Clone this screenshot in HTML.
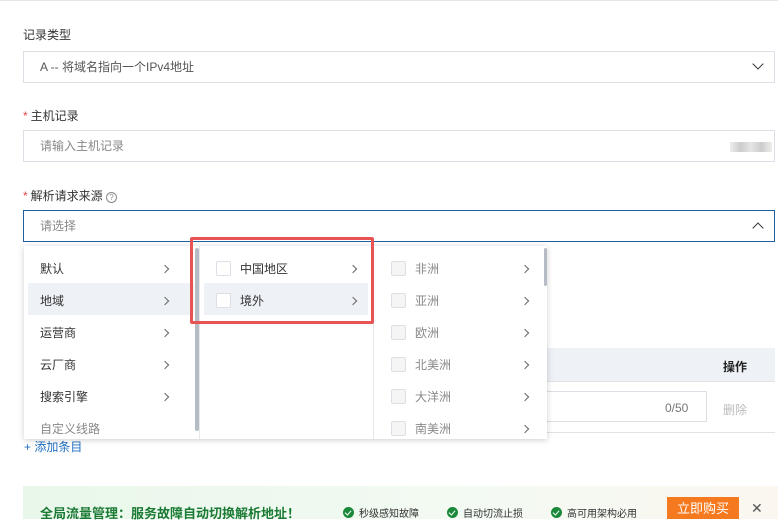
<!DOCTYPE html>
<html><head><meta charset="utf-8"><style>
*{box-sizing:border-box;margin:0;padding:0}
body{width:778px;height:519px;overflow:hidden;background:#fff;font-family:"Liberation Sans","Noto Sans CJK SC",sans-serif;font-size:12px;color:#333;position:relative}
.a{position:absolute}
.lbl{font-size:12px;color:#333}
.lbl i{color:#e54545;font-style:normal;margin-right:3px}
.inp{border:1px solid #dcdfe6;height:32px;left:23px;width:752px;padding-left:16px;line-height:30px;color:#888;font-size:12px}
.chev{position:absolute;right:12px;top:10px;width:8px;height:8px;border-right:1.5px solid #333;border-bottom:1.5px solid #333}
.row{position:absolute;height:32px;line-height:32px;font-size:12px;color:#333}
.arr{position:absolute;width:6px;height:6px;border-right:1px solid #666;border-top:1px solid #666;transform:rotate(45deg)}
.cb{position:absolute;width:15px;height:15px;border:1px solid #dcdfe6;background:#fff;border-radius:2px}
.cb.d{background:#f5f5f5}
.badge{position:absolute;display:inline-flex;align-items:center;font-size:10px;color:#333;white-space:nowrap}
.badge b{width:11px;height:11px;border-radius:50%;background:#1a8a3a;margin-right:5px;display:inline-block;position:relative}
.badge b:after{content:"";position:absolute;left:3px;top:2px;width:3px;height:5px;border-right:1.5px solid #fff;border-bottom:1.5px solid #fff;transform:rotate(40deg)}
</style></head><body>
<div class="a" style="left:0;top:0;width:778px;height:1px;background:#e6e6e6"></div>
<div class="a lbl" style="left:23px;top:26px">记录类型</div>
<div class="a inp" style="top:51px;color:#555">A -- 将域名指向一个IPv4地址<span class="chev" style="transform:rotate(45deg);top:8px"></span></div>
<div class="a lbl" style="left:23px;top:107px"><i>*</i>主机记录</div>
<div class="a inp" style="top:130px">请输入主机记录<span class="a" style="right:2px;top:11px;width:42px;height:10px;background:linear-gradient(90deg,#eee,#ccc,#e5e5e5,#ccc,#eee)"></span></div>
<div class="a lbl" style="left:23px;top:187px"><i>*</i>解析请求来源 <span style="display:inline-block;width:11px;height:11px;border:1px solid #888;border-radius:50%;font-size:8px;line-height:9px;text-align:center;color:#888">?</span></div>
<div class="a inp" style="top:210px;border-color:#1f5f9e">请选择<span class="chev" style="transform:rotate(-135deg);top:13px"></span></div>

<div class="a" style="left:547px;top:348px;width:228px;height:34px;background:#eef1f6;border-bottom:1px solid #e3e3e3"></div>
<div class="a" style="left:723px;top:358px;font-weight:bold;color:#222">操作</div>
<div class="a" style="left:540px;top:391px;width:167px;height:31px;border:1px solid #dcdfe6"></div>
<div class="a" style="left:665px;top:401px;color:#777">0/50</div>
<div class="a" style="left:723px;top:401px;color:#bbb">删除</div>
<div class="a" style="left:540px;top:432px;width:235px;height:1px;background:#e3e3e3"></div>
<div class="a" style="left:24px;top:438px;color:#1f6fc2;font-size:12px">+ 添加条目</div>

<div class="a" style="left:24px;top:246px;width:523px;height:193px;background:#fff;box-shadow:0 1px 6px rgba(0,0,0,.2);overflow:hidden">
 <div class="a" style="left:171px;top:2px;width:4px;height:183px;background:#b5bcc6;border-radius:2px"></div>
 <div class="a" style="left:175px;top:0;width:1px;height:193px;background:#e8e8e8"></div>
 <div class="a" style="left:349px;top:0;width:1px;height:193px;background:#e8e8e8"></div>
 <div class="a" style="left:520px;top:2px;width:3px;height:38px;background:#b5bcc6;border-radius:2px"></div>
 <div class="a" style="left:4px;top:37px;width:166px;height:32px;background:#eef1f6"></div>
 <div class="a" style="left:180px;top:37px;width:164px;height:32px;background:#eef1f6"></div>
 <div class="row" style="left:16px;top:7px">默认</div>
 <div class="row" style="left:16px;top:39px">地域</div>
 <div class="row" style="left:16px;top:71px">运营商</div>
 <div class="row" style="left:16px;top:103px">云厂商</div>
 <div class="row" style="left:16px;top:135px">搜索引擎</div>
 <div class="row" style="left:16px;top:167px;color:#888">自定义线路</div>
 <div class="arr" style="left:138px;top:20px"></div><div class="arr" style="left:138px;top:52px"></div><div class="arr" style="left:138px;top:84px"></div><div class="arr" style="left:138px;top:116px"></div><div class="arr" style="left:138px;top:148px"></div>
 <div class="cb" style="left:192px;top:15px"></div><div class="row" style="left:216px;top:7px">中国地区</div><div class="arr" style="left:326px;top:20px"></div>
 <div class="cb" style="left:192px;top:47px"></div><div class="row" style="left:216px;top:39px">境外</div><div class="arr" style="left:326px;top:52px"></div>
 <div class="cb d" style="left:367px;top:15px"></div><div class="row" style="left:391px;top:7px;color:#888">非洲</div><div class="arr" style="left:498px;top:20px"></div>
 <div class="cb d" style="left:367px;top:47px"></div><div class="row" style="left:391px;top:39px;color:#888">亚洲</div><div class="arr" style="left:498px;top:52px"></div>
 <div class="cb d" style="left:367px;top:79px"></div><div class="row" style="left:391px;top:71px;color:#888">欧洲</div><div class="arr" style="left:498px;top:84px"></div>
 <div class="cb d" style="left:367px;top:111px"></div><div class="row" style="left:391px;top:103px;color:#888">北美洲</div><div class="arr" style="left:498px;top:116px"></div>
 <div class="cb d" style="left:367px;top:143px"></div><div class="row" style="left:391px;top:135px;color:#888">大洋洲</div><div class="arr" style="left:498px;top:148px"></div>
 <div class="cb d" style="left:367px;top:175px"></div><div class="row" style="left:391px;top:167px;color:#888">南美洲</div><div class="arr" style="left:498px;top:180px"></div>
</div>
<div class="a" style="left:190px;top:237px;width:184px;height:87px;border:3px solid #e85454;border-radius:2px"></div>

<div class="a" style="left:23px;top:486px;width:755px;height:33px;background:linear-gradient(90deg,#e9f7ea,#f3faf3 60%,#fbf6f0)"></div>
<div class="a" style="left:40px;top:503px;color:#1a7a34;font-size:13px;font-weight:bold">全局流量管理：服务故障自动切换解析地址！</div>
<span class="badge" style="left:343px;top:505px"><b></b>秒级感知故障</span>
<span class="badge" style="left:447px;top:505px"><b></b>自动切流止损</span>
<span class="badge" style="left:551px;top:505px"><b></b>高可用架构必用</span>
<div class="a" style="left:667px;top:497px;width:72px;height:22px;background:#f57a1f;color:#fff;font-size:13px;text-align:center;line-height:24px">立即购买</div>
<div class="a" style="left:751px;top:500px;font-size:14px;color:#555">✕</div>
</body></html>
